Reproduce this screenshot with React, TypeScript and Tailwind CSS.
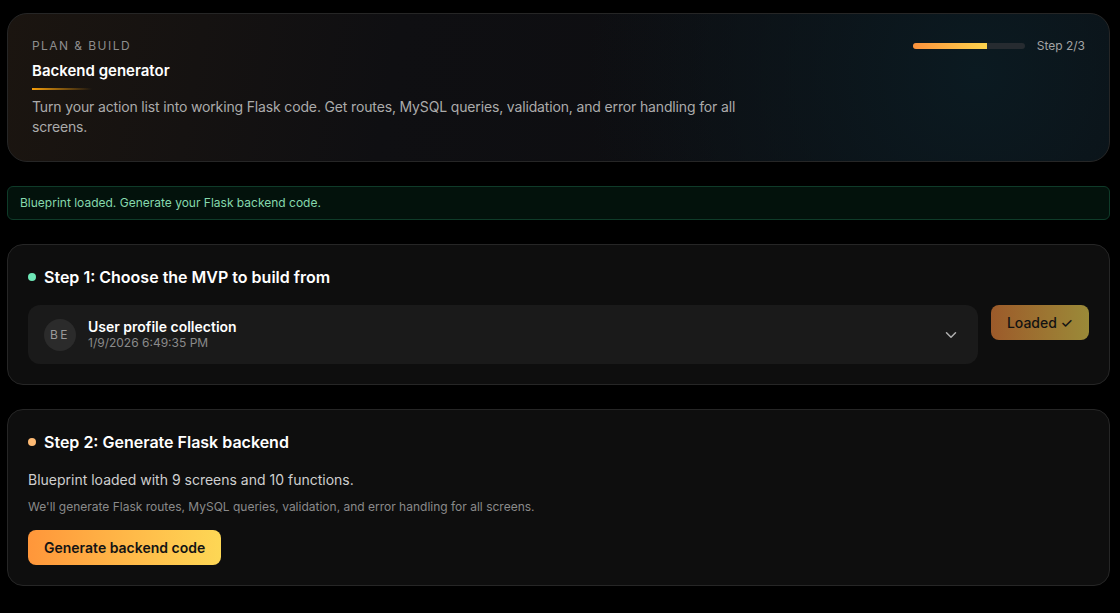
import { ChevronDown } from 'lucide-react';

const App = () => {
  return (
    <div className="min-h-screen bg-black pl-[7px] pr-[10px] pt-[13px] pb-6 font-['Inter',sans-serif] text-white">
      <div className="space-y-6">
        {/* hero */}
        <div className="rounded-[20px] border border-[#262626] bg-[radial-gradient(circle_at_88%_40%,#0b1a21_0%,transparent_40%),linear-gradient(100deg,#1b1510_0%,#0f0f12_35%,#0b0c10_100%)] px-6 pt-6 pb-6">
          <div className="flex items-start justify-between">
            <div>
              <div className="text-xs uppercase leading-4 tracking-[0.12em] text-[#8d8d8d]">Plan &amp; Build</div>
              <h1 className="mt-2 text-[15px] font-semibold leading-[18px] text-white">Backend generator</h1>
              <div className="mt-2 h-[2px] w-[60px] bg-gradient-to-r from-[#f59e0b] to-transparent" />
              <p className="mt-[7px] max-w-[730px] text-sm leading-5 tracking-[-0.15px] text-[#ababab]">
                Turn your action list into working Flask code. Get routes, MySQL queries, validation, and error handling for all screens.
              </p>
            </div>
            <div className="flex h-4 items-center gap-3">
              <div className="h-[6px] w-[112px] overflow-hidden rounded-full bg-[#262b30]">
                <div className="h-full w-[66%] bg-gradient-to-r from-[#fb923c] to-[#fcd34d]" />
              </div>
              <span className="text-xs text-[#a3a3a3]">Step 2/3</span>
            </div>
          </div>
        </div>

        {/* alert */}
        <div className="rounded-md border border-[#0f3b29] bg-[#03120c] px-3 py-[8px] text-xs leading-4 text-[#86d9ad]">
          Blueprint loaded. Generate your Flask backend code.
        </div>

        {/* step 1 */}
        <div className="rounded-2xl border border-[#262626] bg-[#0e0e0e] p-5">
          <div className="flex items-center gap-2">
            <span className="h-2 w-2 rounded-full bg-[#6ee7b7]" />
            <h2 className="text-base font-semibold leading-6">Step 1: Choose the MVP to build from</h2>
          </div>
          <div className="mt-4 flex items-start gap-[13px]">
            <button className="flex h-[59px] flex-1 items-center gap-3 rounded-xl bg-[#1a1a1a] pl-4 pr-[18px] text-left">
              <span className="flex h-8 w-8 items-center justify-center rounded-full bg-[#2b2b2b] text-xs tracking-[0.2em] text-[#9a9a9a]">
                BE
              </span>
              <span className="flex-1">
                <span className="block text-sm font-semibold leading-4 text-white">User profile collection</span>
                <span className="block text-xs leading-4 text-[#8a8a8a]">1/9/2026 6:49:35 PM</span>
              </span>
              <ChevronDown size={18} className="text-[#b0b0b0]" />
            </button>
            <button className="h-[35px] rounded-lg bg-gradient-to-r from-[#9c5a2a] to-[#9a8a38] px-4 text-sm font-medium text-[#121212]">
              Loaded ✓
            </button>
          </div>
        </div>

        {/* step 2 */}
        <div className="rounded-2xl border border-[#262626] bg-[#0e0e0e] p-5">
          <div className="flex items-center gap-2">
            <span className="h-2 w-2 rounded-full bg-[#fdba74]" />
            <h2 className="text-base font-semibold leading-6">Step 2: Generate Flask backend</h2>
          </div>
          <p className="mt-4 text-sm leading-5 text-[#cfcfcf]">Blueprint loaded with 9 screens and 10 functions.</p>
          <p className="mt-[9px] text-xs leading-4 text-[#8a8a8a]">
            We'll generate Flask routes, MySQL queries, validation, and error handling for all screens.
          </p>
          <button className="mt-[15px] h-[35px] rounded-lg bg-gradient-to-r from-[#ff963a] to-[#fdd755] px-4 text-sm font-semibold text-[#141414]">
            Generate backend code
          </button>
        </div>
      </div>
    </div>
  );
};

export default App;
